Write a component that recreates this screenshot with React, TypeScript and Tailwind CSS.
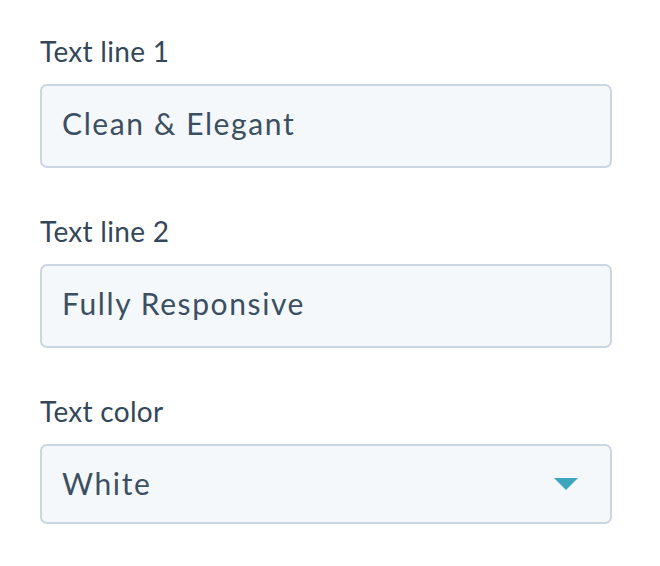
import React from "react";

function Field({ label, value, select }: { label: string; value: string; select?: boolean }) {
  return (
    <div className="flex flex-col">
      <div className="text-[28px] leading-[36px] font-normal tracking-[0.3px] text-[#33475b] mb-[15px]">{label}</div>
      <div
        className={
          "flex items-center rounded-[7px] border-2 border-[#cbd6e2] bg-[#f5f8fa] pl-[20px] pr-[32px] " +
          (select ? "h-[80px]" : "h-[84px]")
        }
      >
        <span
          className={
            "text-[30px] leading-[40px] font-normal tracking-[1.6px] text-[#3b4f63] " +
            (select ? "pb-[3px]" : "pb-[6px]")
          }
        >
          {value}
        </span>
        {select && (
          <svg className="ml-auto" width="24" height="12" viewBox="0 0 24 12">
            <polygon points="0,0 24,0 12,12" fill="#3ba6be" />
          </svg>
        )}
      </div>
    </div>
  );
}

export default function App() {
  return (
    <div
      className="w-[660px] h-[566px] bg-white pt-[33px] pl-[40px] pr-[48px] flex flex-col gap-[45px]"
      style={{ fontFamily: "Lato, 'Open Sans', sans-serif" }}
    >
      <Field label="Text line 1" value="Clean & Elegant" />
      <Field label="Text line 2" value="Fully Responsive" />
      <Field label="Text color" value="White" select />
    </div>
  );
}
